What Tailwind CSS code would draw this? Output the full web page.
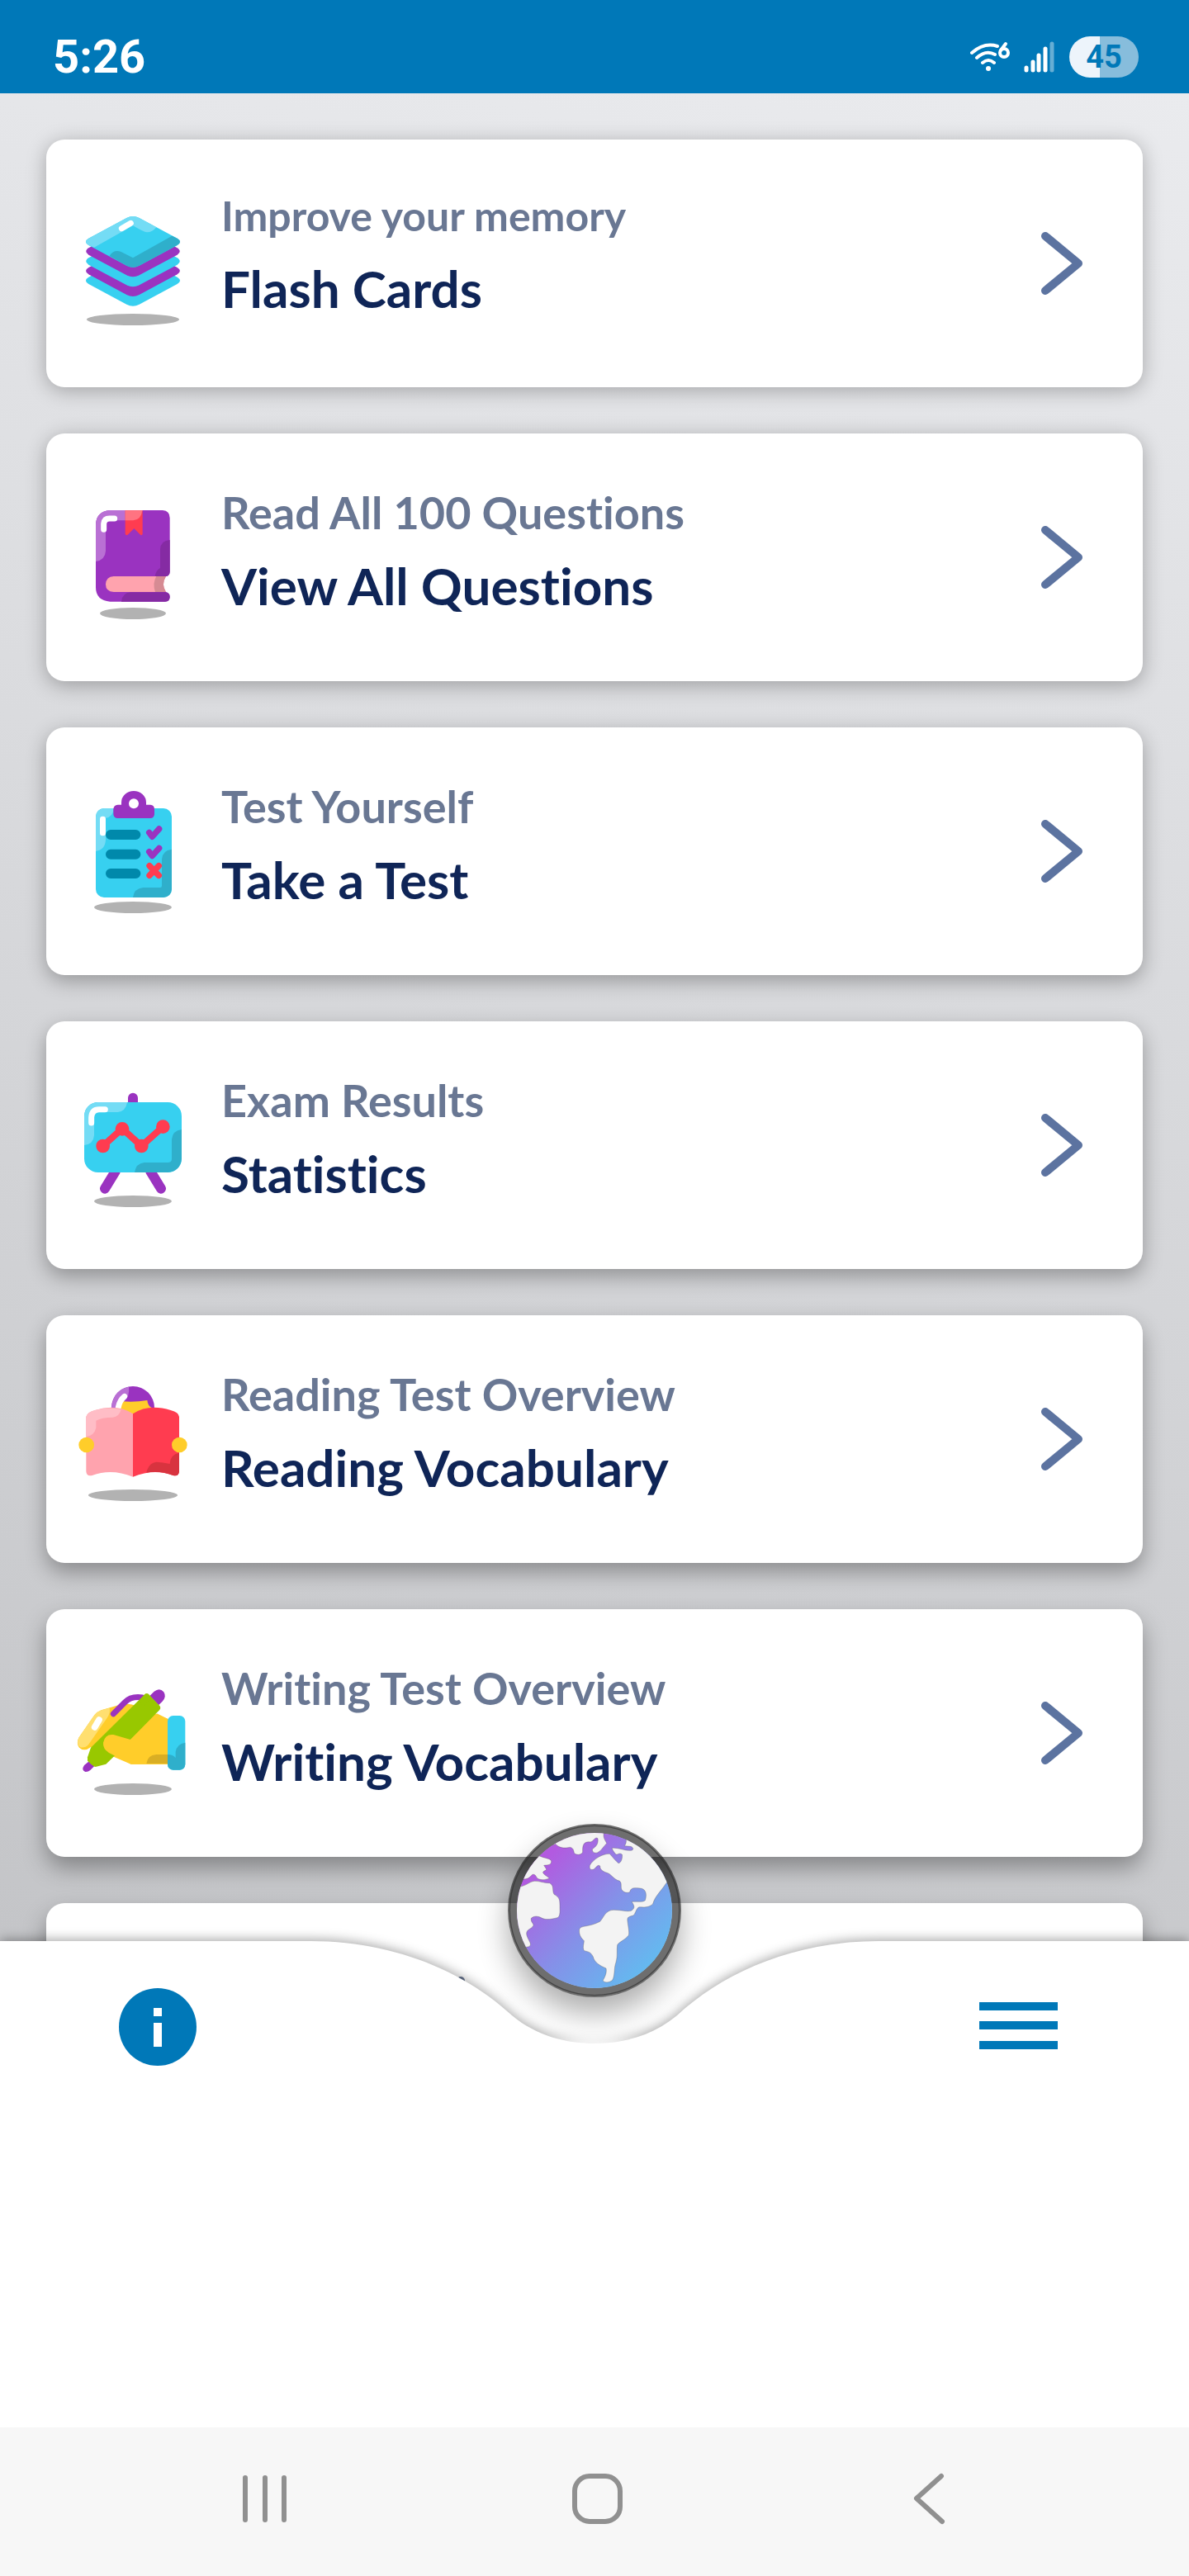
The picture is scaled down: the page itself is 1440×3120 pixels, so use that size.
<!doctype html>
<html lang="en">

<head>
    <meta charset="UTF-8">
    <meta name="viewport" content="width=device-width, initial-scale=1.0">
    <title>Civics Test</title>
    <script src="https://cdn.jsdelivr.net/npm/@tailwindcss/browser@4"></script>
</head>

<body class="h-screen flex flex-col overflow-hidden bg-white font-['Lato',sans-serif] [font-variant-ligatures:none]">

    <!-- Status bar -->
    <header class="h-[113px] shrink-0 bg-[#0078b8] text-white flex items-center justify-between pt-6 pl-16 pr-[61px]">
        <span class="font-['Roboto',sans-serif] font-bold text-[56px] leading-none">5:26</span>
        <div class="flex items-center">
            <svg class="w-12 h-10 mr-4" viewBox="0 0 48 40" fill="none" stroke="#fff" stroke-width="4" stroke-linecap="round">
                <path d="M2 15Q17 2 33 7M8 21Q19 11 30 17M15 27Q22 21 29 27" />
                <circle cx="22" cy="34" r="3" fill="#fff" stroke="none" />
                <circle cx="41" cy="15" r="5" />
                <path d="M37 12L43 4" />
            </svg>
            <svg class="w-10 h-10 mr-4" viewBox="0 0 40 40" stroke="#fff" stroke-width="5" stroke-linecap="round">
                <path d="M4 36V33M12 36V26M19 36V18M27 36V10" />
                <path d="M35 36V4" stroke-opacity=".4" />
            </svg>
            <div class="w-[84px] h-[50px] rounded-full bg-[linear-gradient(90deg,#edf4fb_37px,#87bddc_37px)] flex items-center justify-center">
                <span class="font-['Roboto',sans-serif] font-bold text-[38px] leading-none text-[#0078b8]">45</span>
            </div>
        </div>
    </header>

    <!-- Menu list -->
    <main class="flex-1 min-h-0 overflow-hidden bg-[linear-gradient(193deg,#eaebee,#c2c3c6)] px-14 pt-14">
        <nav class="flex flex-col gap-14">

            <a href="#" class="h-[300px] shrink-0 rounded-[22px] bg-white shadow-[0_4px_24px_rgba(0,0,0,0.28)] flex items-center pl-[30px] pr-[72px]">
                <svg class="w-[150px] h-[150px] shrink-0 mr-8" viewBox="48 42 450 450">
                    <ellipse cx="273" cy="471" rx="168" ry="21" fill="#b2b2b2" />
                    <path transform="translate(0 141)" fill="#37d0f0" d="M250 102q23-12 46 0l138 74q20 12 0 25l-138 74q-23 12-46 0l-138-74q-20-13 0-25z" />
                    <path transform="translate(0 106)" fill="#9a33c0" d="M250 102q23-12 46 0l138 74q20 12 0 25l-138 74q-23 12-46 0l-138-74q-20-13 0-25z" />
                    <path transform="translate(0 71)" fill="#37d0f0" d="M250 102q23-12 46 0l138 74q20 12 0 25l-138 74q-23 12-46 0l-138-74q-20-13 0-25z" />
                    <path transform="translate(0 35)" fill="#9a33c0" d="M250 102q23-12 46 0l138 74q20 12 0 25l-138 74q-23 12-46 0l-138-74q-20-13 0-25z" />
                    <path fill="#37d0f0" d="M250 102q23-12 46 0l138 74q20 12 0 25l-138 74q-23 12-46 0l-138-74q-20-13 0-25z" />
                    <path fill="#74dcf5" d="M250 102q23-12 46 0l62 34q-14 18-34 18q-12-1-51-24l-141 79l-20-8q-20-13 0-25z" />
                    <path fill="#2fafcb" d="M415 167l19 9q20 12 0 25l-138 74q-23 12-46 0l-62-35q15-25 42-15l43 22z" />
                    <path stroke="#fff" stroke-width="21" stroke-linecap="round" d="M232 140L265 121" />
                </svg>
                <div class="flex-1 pb-7">
                    <p class="text-[50px] leading-[88px] font-bold text-[#697793]">Improve your memory</p>
                    <h2 class="text-[62px] leading-[88px] font-bold text-[#0f2557]">Flash Cards</h2>
                </div>
                <svg class="w-[52px] h-[76px] shrink-0" viewBox="0 0 52 76" fill="none" stroke="#5c73a0" stroke-width="10" stroke-linecap="round" stroke-linejoin="round">
                    <path d="M6 5L46 38L6 71" />
                </svg>
            </a>

            <a href="#" class="h-[300px] shrink-0 rounded-[22px] bg-white shadow-[0_5px_24px_rgba(0,0,0,0.29)] flex items-center pl-[30px] pr-[72px]">
                <svg class="w-[150px] h-[150px] shrink-0 mr-8" viewBox="-12 30 450 450">
                    <ellipse cx="213" cy="459" rx="120" ry="21" fill="#b2b2b2" />
                    <path fill="#9a33c0" d="M130 84H321Q347 86 347 112V308Q346 323 332 324Q314 353 332 381Q347 384 347 399Q347 416 330 416H130Q78 412 78 364V135Q80 88 130 84Z" />
                    <path fill="#ffa3ae" d="M143 324H333Q315 353 333 381H143Q114 379 114 353Q115 326 143 324Z" />
                    <path fill="#d68b93" d="M298 324H333Q315 353 333 381H294Q283 350 298 324Z" />
                    <path fill="#852ba3" d="M347 192V308Q346 323 332 324H293Q297 302 312 294V226Q314 194 347 192Z" />
                    <path fill="#852ba3" d="M205 382H333Q347 385 347 399Q347 416 330 416H171Q174 384 205 382Z" />
                    <path fill="#b970d4" d="M130 84H248Q243 119 214 121H131Q114 122 114 138V232Q112 266 78 270V135Q80 88 130 84Z" />
                    <path fill="#ff3c50" d="M185 85H248V170Q246 177 240 173L217 150L194 173Q188 177 185 170Z" />
                    <path fill="#ff7381" d="M185 85H247Q243 119 214 121H185Z" />
                    <path fill="none" stroke="#fff" stroke-width="21" stroke-linecap="round" d="M107 154V133Q109 114 128 114H146" />
                </svg>
                <div class="flex-1 pb-5">
                    <p class="text-[54px] leading-[88px] font-bold text-[#697793]">Read All 100 Questions</p>
                    <h2 class="text-[62px] leading-[88px] font-bold text-[#0f2557]">View All Questions</h2>
                </div>
                <svg class="w-[52px] h-[76px] shrink-0" viewBox="0 0 52 76" fill="none" stroke="#5c73a0" stroke-width="10" stroke-linecap="round" stroke-linejoin="round">
                    <path d="M6 5L46 38L6 71" />
                </svg>
            </a>

            <a href="#" class="h-[300px] shrink-0 rounded-[22px] bg-white shadow-[0_7px_24px_rgba(0,0,0,0.30)] flex items-center pl-[30px] pr-[72px]">
                <svg class="w-[150px] h-[150px] shrink-0 mr-8" viewBox="-12 48 450 450">
                    <ellipse cx="213" cy="477" rx="141" ry="21" fill="#b2b2b2" />
                    <rect x="78" y="117" width="276" height="324" rx="30" fill="#37d0f0" />
                    <path fill="#74dcf5" d="M108 117H143Q140 150 114 152V232Q112 268 78 273V147Q80 120 108 117Z" />
                    <path fill="#2fafcb" d="M354 266V411Q351 439 324 441H213Q217 408 250 405H312Q318 405 318 399V302Q320 270 354 266Z" />
                    <rect x="93" y="146" width="21" height="71" rx="10" fill="#fff" />
                    <path fill="#9a33c0" d="M158 104H171V96A45 42 0 0 1 261 96V104H276Q291 105 291 120V139Q290 153 276 153H158Q143 153 142 139V120Q143 105 158 104Z" />
                    <circle cx="216" cy="100" r="18" fill="#fff" />
                    <g fill="none" stroke-linecap="round" stroke-linejoin="round">
                        <path stroke="#0089ab" stroke-width="36" d="M132 213H223M132 284H223M132 354H223" />
                        <path stroke="#9a33c0" stroke-width="22" d="M272 205L283 220L308 192M272 275L283 290L308 262" />
                        <path stroke="#ff3c50" stroke-width="22" d="M273 326L307 361M307 326L273 361" />
                    </g>
                </svg>
                <div class="flex-1 pb-5">
                    <p class="text-[54px] leading-[88px] font-bold text-[#697793]">Test Yourself</p>
                    <h2 class="text-[62px] leading-[88px] font-bold text-[#0f2557]">Take a Test</h2>
                </div>
                <svg class="w-[52px] h-[76px] shrink-0" viewBox="0 0 52 76" fill="none" stroke="#5c73a0" stroke-width="10" stroke-linecap="round" stroke-linejoin="round">
                    <path d="M6 5L46 38L6 71" />
                </svg>
            </a>

            <a href="#" class="h-[300px] shrink-0 rounded-[22px] bg-white shadow-[0_9px_25px_rgba(0,0,0,0.31)] flex items-center pl-[30px] pr-[72px]">
                <svg class="w-[150px] h-[150px] shrink-0 mr-8" viewBox="18 36 450 450">
                    <ellipse cx="243" cy="465" rx="141" ry="21" fill="#b2b2b2" />
                    <path fill="none" stroke="#9a33c0" stroke-width="36" stroke-linecap="round" d="M243 89V130M180 355L141 419M306 355L345 419" />
                    <rect x="66" y="105" width="354" height="255" rx="50" fill="#37d0f0" />
                    <path fill="#74dcf5" d="M116 105H222Q217 138 188 141H114Q102 142 102 152V226Q99 258 66 261V155Q70 109 116 105Z" />
                    <path fill="#2fafcb" d="M420 204V310Q415 356 370 360H249Q254 327 284 324H372Q384 323 384 312V240Q387 208 420 204Z" />
                    <path fill="none" stroke="#fff" stroke-width="21" stroke-linecap="round" d="M92 180V160Q94 131 120 131H142" />
                    <path fill="none" stroke="#ff3c50" stroke-width="24" d="M134 264L204 201L274 264L352 194" />
                    <g fill="#ff3c50">
                        <circle cx="134" cy="264" r="25" />
                        <circle cx="204" cy="202" r="25" />
                        <circle cx="274" cy="264" r="25" />
                        <circle cx="352" cy="194" r="25" />
                    </g>
                </svg>
                <div class="flex-1 pb-5">
                    <p class="text-[54px] leading-[88px] font-bold text-[#697793]">Exam Results</p>
                    <h2 class="text-[62px] leading-[88px] font-bold text-[#0f2557]">Statistics</h2>
                </div>
                <svg class="w-[52px] h-[76px] shrink-0" viewBox="0 0 52 76" fill="none" stroke="#5c73a0" stroke-width="10" stroke-linecap="round" stroke-linejoin="round">
                    <path d="M6 5L46 38L6 71" />
                </svg>
            </a>

            <a href="#" class="h-[300px] shrink-0 rounded-[22px] bg-white shadow-[0_11px_26px_rgba(0,0,0,0.32)] flex items-center pl-[30px] pr-[72px]">
                <svg class="w-[150px] h-[150px] shrink-0 mr-8" viewBox="18 24 450 450">
                    <ellipse cx="243" cy="453" rx="162" ry="21" fill="#b2b2b2" />
                    <circle cx="243" cy="135" r="78" fill="#9a33c0" />
                    <path fill="#b970d4" d="M165 142Q168 70 228 59Q232 92 212 112L190 145Z" />
                    <path fill="#ffcd2a" d="M205 112Q250 116 295 108Q297 130 313 136L243 160L195 145Z" />
                    <path stroke="#fff" stroke-width="21" stroke-linecap="round" d="M190 133Q195 108 212 94" fill="none" />
                    <path fill="#ffa3ae" d="M243 157V386Q165 355 95 381Q74 386 73 366V168Q76 152 105 144Q185 120 243 157Z" />
                    <path fill="#ff3c50" d="M243 157Q300 120 380 144Q410 152 411 168V366Q410 386 389 381Q320 355 243 386Z" />
                    <path fill="#ffbdc6" d="M73 240V168Q76 152 105 144Q155 130 200 142Q193 168 170 170Q130 170 109 182V208Q102 238 73 240Z" />
                    <path fill="#d8333f" d="M411 299V366Q410 386 389 381Q340 362 292 371Q300 335 328 332Q350 333 377 339Q378 305 411 299Z" />
                    <circle cx="74" cy="270" r="28" fill="#ffcd2a" />
                    <circle cx="412" cy="270" r="28" fill="#ffcd2a" />
                </svg>
                <div class="flex-1 pb-5">
                    <p class="text-[54px] leading-[88px] font-bold text-[#697793]">Reading Test Overview</p>
                    <h2 class="text-[62px] leading-[88px] font-bold text-[#0f2557]">Reading Vocabulary</h2>
                </div>
                <svg class="w-[52px] h-[76px] shrink-0" viewBox="0 0 52 76" fill="none" stroke="#5c73a0" stroke-width="10" stroke-linecap="round" stroke-linejoin="round">
                    <path d="M6 5L46 38L6 71" />
                </svg>
            </a>

            <a href="#" class="h-[300px] shrink-0 rounded-[22px] bg-white shadow-[0_13px_28px_rgba(0,0,0,0.34)] flex items-center pl-[30px] pr-[72px]">
                <svg class="w-[150px] h-[150px] shrink-0 mr-8" viewBox="18 12 450 450">
                    <ellipse cx="243" cy="441" rx="141" ry="21" fill="#b2b2b2" />
                    <path fill="#ffcd2a" d="M46 254L103 172Q112 160 128 154L185 137Q225 124 260 142L372 187V350H236L90 288Q66 307 48 290Q36 275 46 254Z" />
                    <path fill="#ffdf70" d="M46 254L103 172Q112 160 128 154L158 146Q162 165 148 184L82 278Q70 292 52 289Q36 275 46 254Z" />
                    <path stroke="#fff" stroke-width="23" stroke-linecap="round" d="M104 216L120 189" />
                    <path fill="#9a33c0" d="M304 102L320 86Q340 70 355 88Q366 106 350 122L336 136ZM88 336L66 354Q54 372 70 378Q80 379 88 372L104 356Z" />
                    <path fill="#98c800" d="M284 98Q293 90 302 98L340 138Q346 146 339 154L172 324L145 350L107 360Q98 358 78 338V325L90 290Z" />
                    <path fill="none" stroke="#9a33c0" stroke-width="21" stroke-linecap="round" d="M172 167L213 126Q236 102 277 108" />
                    <path fill="#98c800" d="M266 116L284 98Q293 90 302 98L312 110L280 140Z" />
                    <path fill="#ffcd2a" d="M234 261L250 246L330 166L372 187V350H236L156 309Q133 294 135 272Q141 240 172 243Z" />
                    <path fill="#d9ae24" d="M292 348Q296 317 328 315H372V348Z" />
                    <rect x="369" y="174" width="64" height="197" rx="20" fill="#37d0f0" />
                    <path fill="#2fafcb" d="M433 272V351Q431 370 413 371H389Q370 369 369 351V315Q388 315 398 327V306Q402 276 433 272Z" />
                </svg>
                <div class="flex-1 pb-5">
                    <p class="text-[54px] leading-[88px] font-bold text-[#697793]">Writing Test Overview</p>
                    <h2 class="text-[62px] leading-[88px] font-bold text-[#0f2557]">Writing Vocabulary</h2>
                </div>
                <svg class="w-[52px] h-[76px] shrink-0" viewBox="0 0 52 76" fill="none" stroke="#5c73a0" stroke-width="10" stroke-linecap="round" stroke-linejoin="round">
                    <path d="M6 5L46 38L6 71" />
                </svg>
            </a>

            <!-- next card, mostly under the bottom bar -->
            <div class="h-[300px] shrink-0 rounded-[22px] bg-white shadow-[0_14px_28px_rgba(0,0,0,0.34)] pt-[89px] pl-[497px]">
                <div class="w-[10px] h-4 rounded-full bg-[#697793]"></div>
            </div>
        </nav>
    </main>

    <!-- Bottom bar with the notch for the globe button -->
    <footer class="relative shrink-0 -mt-[124px]">
        <button aria-label="Home" class="absolute left-1/2 -top-[142px] -translate-x-1/2 w-[210px] h-[210px] rounded-full shadow-[0_20px_36px_rgba(0,0,0,0.32)]">
            <svg class="w-full h-full" viewBox="165 87 630 630">
                <defs>
                    <linearGradient id="sea" x1="0.1" y1="0.1" x2="0.9" y2="0.85">
                        <stop offset="0.1" stop-color="#b25ae0" />
                        <stop offset="0.55" stop-color="#8590e8" />
                        <stop offset="1" stop-color="#62bcf0" />
                    </linearGradient>
                    <clipPath id="disc">
                        <circle cx="480" cy="402" r="282" />
                    </clipPath>
                </defs>
                <circle cx="480" cy="402" r="298" fill="none" stroke="#000" stroke-opacity="0.57" stroke-width="34" />
                <circle cx="480" cy="402" r="308" fill="none" stroke="#333" stroke-opacity="0.7" stroke-width="4" />
                <circle cx="480" cy="402" r="282" fill="url(#sea)" />
                <g clip-path="url(#disc)" fill="#f3f3f3" stroke="#555" stroke-opacity="0.5" stroke-width="2">
                    <path d="M330 165L340 110L514 110V121C510 140 522 150 524 158C510 172 505 185 490 192C475 195 470 185 473 178C485 170 495 160 492 140C482 132 478 150 465 153C440 150 436 165 437 190C430 203 412 200 406 193C404 175 395 170 385 173C360 178 345 168 338 160Z" />
                    <path d="M595 140L700 170L760 270L741 302C715 340 700 350 692 378C675 395 650 388 640 390C628 400 630 415 620 420C605 425 598 425 600 440C603 465 607 480 604 492C590 510 570 515 563 527C560 550 565 565 558 590C550 610 555 640 545 655C530 668 510 662 511 655C520 640 525 625 522 612C500 602 480 592 475 570C465 550 455 552 443 548C435 540 442 520 442 512C430 500 423 490 425 470C430 455 460 463 500 442C515 425 520 400 550 400C580 400 600 408 615 402C628 392 625 385 615 370C635 368 655 373 664 365C672 340 665 322 645 321C615 318 612 322 608 335C595 340 585 335 578 325C575 310 580 300 570 294C550 290 540 268 525 265C505 258 500 250 500 240C490 232 485 250 475 253C460 255 462 245 463 238C475 215 510 195 535 196C548 210 555 220 567 230C580 228 582 205 580 198C570 190 565 200 558 198C550 190 545 180 543 175C570 172 595 188 617 183C625 175 615 170 610 169L589 167C594 160 596 155 595 140Z" />
                    <path d="M278 203C300 213 320 212 323 222C324 238 310 236 296 238C300 245 308 252 303 256C285 262 292 268 316 284C300 292 285 292 272 285C265 272 262 270 255 271C240 285 240 288 215 288L200 250Z" />
                    <path d="M205 316C235 312 240 298 262 295C285 295 295 303 317 302C335 312 325 330 333 343C355 355 354 365 354 390C355 410 354 425 345 428C325 433 305 437 290 430C275 422 262 420 250 430C247 445 262 450 257 458C250 470 232 470 233 487C235 505 252 520 246 530C240 535 235 534 228 535L180 450Z" />
                </g>
            </svg>
        </button>

        <div class="relative pointer-events-none flex h-[124px] drop-shadow-[0_-2px_7px_rgba(0,0,0,0.35)]">
            <div class="flex-1 bg-white"></div>
            <svg class="w-[720px] h-[126px] -mx-px shrink-0" viewBox="360 0 720 126" fill="#fff">
                <path d="M360 0H376C480 0 565 39 620 90C650 115 686 124 720 124C754 124 790 115 820 90C875 39 960 0 1064 0H1080V126H360Z" />
            </svg>
            <div class="flex-1 bg-white"></div>
        </div>

        <div class="relative bg-white h-[465px] pl-[143px] pr-[158px] flex justify-between items-start">
            <button aria-label="Info" class="-mt-[68px]">
                <svg class="w-24 h-24" viewBox="0 0 96 96">
                    <circle cx="48" cy="48" r="47" fill="#0078b8" />
                    <path fill="#fff" d="M43 25H53V35H43ZM43 43H53V72H43Z" />
                </svg>
            </button>
            <button aria-label="Menu" class="-mt-[68px]">
                <svg class="w-24 h-24" viewBox="0 0 96 96" fill="#0078b8">
                    <path d="M0 18H95V28H0ZM0 41H95V51H0ZM0 65H95V75H0Z" />
                </svg>
            </button>
        </div>
    </footer>

    <!-- System navigation -->
    <div class="h-[180px] shrink-0 bg-[#f7f7f7] flex justify-between items-start pt-[54px] pl-[289px] pr-[284px]">
        <button aria-label="Recent apps">
            <svg class="w-16 h-16" viewBox="0 0 64 64" stroke="#909090" stroke-width="6" stroke-linecap="round">
                <path d="M8 7V58M32 7V58M55 7V58" />
            </svg>
        </button>
        <button aria-label="Home screen">
            <svg class="w-16 h-16" viewBox="0 0 64 64" fill="none" stroke="#909090" stroke-width="6">
                <rect x="5" y="5" width="55" height="55" rx="18" />
            </svg>
        </button>
        <button aria-label="Back">
            <svg class="w-16 h-16" viewBox="0 0 64 64" fill="none" stroke="#909090" stroke-width="6" stroke-linecap="round" stroke-linejoin="round">
                <path d="M48 5L18 32L49 60" />
            </svg>
        </button>
    </div>

</body>

</html>
